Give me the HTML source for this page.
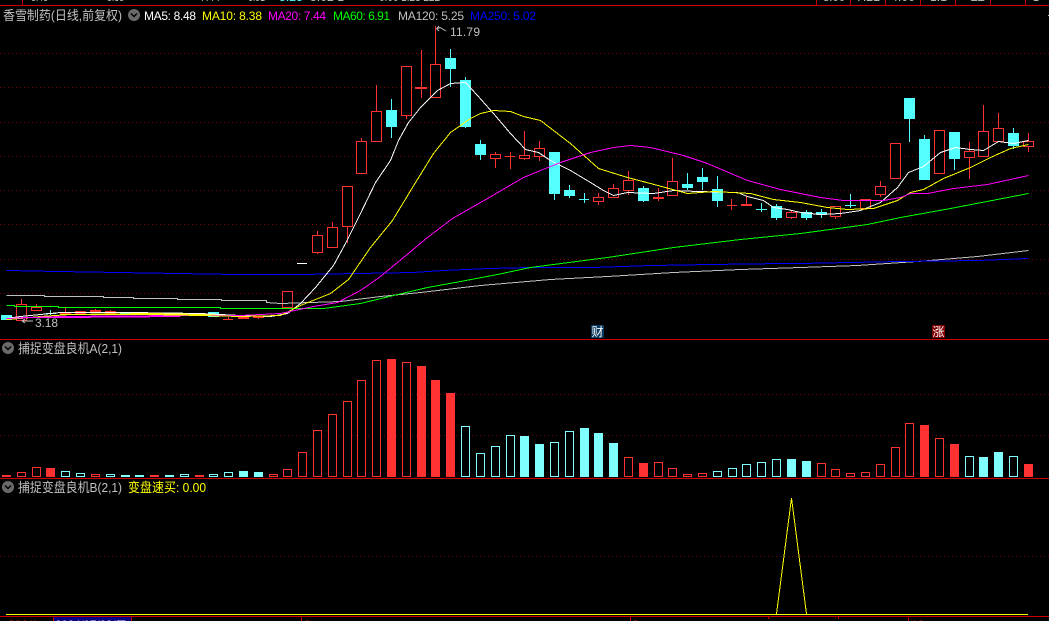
<!DOCTYPE html>
<html><head><meta charset="utf-8"><style>
html,body{margin:0;padding:0;background:#000;width:1049px;height:621px;overflow:hidden}
svg{display:block;position:absolute;left:0;top:0}
text{font-family:"Liberation Sans","WenQuanYi Zen Hei","Noto Sans CJK SC",sans-serif;font-size:12px}
.cn{font-size:13px}
.d{stroke:#780000;stroke-width:1;stroke-dasharray:1 3;fill:none}
.ax{stroke:#c80000;stroke-width:1;fill:none}
.hr{fill:#000;stroke:#ff3232;stroke-width:1}
.hc{fill:#000;stroke:#54ffff;stroke-width:1}
.vc{fill:#000;stroke:#80ffff;stroke-width:1}
.fr{fill:#ff3232}.fc{fill:#54ffff}.vf{fill:#80ffff}
.l{fill:none;stroke-width:1}
</style></head><body>
<svg width="1049" height="621" viewBox="0 0 1049 621" shape-rendering="crispEdges">
<rect width="1049" height="621" fill="#000"/>
<!-- top strip -->
<g fill="#c0c0c0">
<text x="31" y="1" textLength="17" lengthAdjust="spacingAndGlyphs">8.48</text>
<text x="107" y="1" textLength="17" lengthAdjust="spacingAndGlyphs">8.38</text>
<text x="200" y="1" textLength="20" lengthAdjust="spacingAndGlyphs">7.44</text>
<text x="248" y="1" textLength="17" lengthAdjust="spacingAndGlyphs">6.91</text>
<text x="279" y="1" textLength="24" lengthAdjust="spacingAndGlyphs" fill="#54ffff">5.25</text>
<text x="310" y="1" textLength="34" lengthAdjust="spacingAndGlyphs">5.02 1</text>
<text x="379" y="1" textLength="61" lengthAdjust="spacingAndGlyphs">0.00 1.23 222</text>
<text x="823" y="1" textLength="22" lengthAdjust="spacingAndGlyphs">8.00</text>
<text x="856" y="1" textLength="24" lengthAdjust="spacingAndGlyphs">7.21</text>
<text x="891" y="1" textLength="24" lengthAdjust="spacingAndGlyphs">4.00</text>
<text x="930" y="1" textLength="17" lengthAdjust="spacingAndGlyphs">1.1</text>
<text x="970" y="1" textLength="15" lengthAdjust="spacingAndGlyphs">11</text>
<text x="1033" y="1" textLength="6" lengthAdjust="spacingAndGlyphs">1</text>
</g>
<path class="ax" d="M0 5.500H1049M22.500 0V5M816.500 0V5M850.500 0V5M885.500 0V5M920.500 0V5M955.500 0V5M990.500 0V5M1025.500 0V5"/>
<!-- grids -->
<path class="d" d="M0 53.500H1049M0 87.500H1049M0 122.500H1049M0 156.500H1049M0 190.500H1049M0 224.500H1049M0 259.500H1049M0 293.500H1049M0 394.500H1049M0 435.500H1049M0 556.500H1049"/>
<path class="ax" d="M0 339.500H1049M0 478.500H1049M0 616.500H1049M301.500 616V621M630.500 616V621M768.500 616V619M838.500 616V619M908.500 616V621"/>
<!-- candle wicks -->
<path class="l" stroke="#ff3232" d="M21.500 299V304M36.500 304V307M65.500 308V315M95.500 309V312M110.500 310V315M154.500 314V317M228.500 317V320M258.500 316V319M317.500 231V254M332.500 222V227M347.500 227V243M361.500 138V141M376.500 85V111M406.500 116V119M421.500 50V98M435.500 26V64M495.500 152V168M510.500 152V169M524.500 131V160M539.500 141V161M598.500 193V205M613.500 184V188M628.500 171V195M658.500 188V201M672.500 158V181M731.500 199V210M746.500 196V204M791.500 211V219M835.500 217V219M880.500 181V197M969.500 142V179M983.500 105V131M998.500 113V128M1028.500 133V152"/>
<path class="l" stroke="#54ffff" d="M50.500 310V315M391.500 99V138M450.500 49V87M465.500 77V128M480.500 140V160M554.500 194V200M569.500 185V198M584.500 193V203M643.500 186V202M687.500 173V190M702.500 168V190M717.500 176V207M761.500 203V212M776.500 204V220M806.500 210V220M821.500 209V218M850.500 194V208M909.500 119V142M924.500 135V139M954.500 159V170M1013.500 128V149"/>
<!-- candle bodies -->
<g class="fc">
<rect x="1" y="315" width="11" height="5"/><rect x="46" y="313" width="10" height="1"/><rect x="120" y="312" width="11" height="2"/><rect x="208" y="312" width="11" height="5"/>
<rect x="386" y="110" width="11" height="17"/><rect x="445" y="58" width="11" height="11"/><rect x="460" y="80" width="11" height="47"/><rect x="475" y="144" width="11" height="11"/>
<rect x="549" y="152" width="11" height="42"/><rect x="564" y="190" width="11" height="6"/><rect x="579" y="199" width="10" height="1"/><rect x="638" y="188" width="11" height="13"/>
<rect x="682" y="184" width="11" height="4"/><rect x="697" y="177" width="11" height="5"/><rect x="712" y="189" width="11" height="12"/><rect x="756" y="209" width="11" height="1"/>
<rect x="771" y="206" width="11" height="12"/><rect x="801" y="212" width="11" height="6"/><rect x="816" y="212" width="11" height="3"/><rect x="845" y="205" width="11" height="1"/>
<rect x="904" y="98" width="11" height="21"/><rect x="919" y="139" width="11" height="41"/><rect x="949" y="132" width="11" height="27"/><rect x="1008" y="133" width="11" height="13"/>
</g>
<g class="fr">
<rect x="60" y="313" width="11" height="2"/><rect x="90" y="310" width="11" height="2"/><rect x="134" y="313" width="11" height="2"/><rect x="223" y="319" width="10" height="1"/>
<rect x="238" y="317" width="11" height="2"/><rect x="253" y="316" width="11" height="2"/><rect x="415" y="87" width="12" height="2"/><rect x="505" y="156" width="10" height="1"/>
<rect x="653" y="197" width="11" height="2"/><rect x="727" y="205" width="10" height="1"/><rect x="741" y="204" width="11" height="2"/>
</g>
<g class="hr">
<rect x="16.500" y="304.500" width="10" height="16"/><rect x="31.500" y="307.500" width="10" height="3"/><rect x="75.500" y="311.500" width="10" height="2"/><rect x="105.500" y="311.500" width="10" height="2"/><rect x="149.500" y="313.500" width="10" height="2"/><rect x="282.500" y="291.500" width="10" height="16"/>
<rect x="312.500" y="235.500" width="10" height="17"/><rect x="327.500" y="227.500" width="10" height="20"/><rect x="342.500" y="186.500" width="10" height="40"/><rect x="356.500" y="141.500" width="10" height="32"/><rect x="371.500" y="111.500" width="10" height="30"/><rect x="401.500" y="66.500" width="10" height="49"/><rect x="430.500" y="64.500" width="10" height="33"/>
<rect x="490.500" y="154.500" width="10" height="4"/><rect x="519.500" y="155.500" width="10" height="3"/><rect x="534.500" y="148.500" width="10" height="8"/><rect x="593.500" y="197.500" width="10" height="4"/><rect x="608.500" y="188.500" width="10" height="9"/><rect x="623.500" y="180.500" width="10" height="10"/><rect x="667.500" y="181.500" width="10" height="14"/>
<rect x="786.500" y="212.500" width="10" height="5"/><rect x="830.500" y="206.500" width="10" height="10"/><rect x="860.500" y="199.500" width="10" height="9"/><rect x="875.500" y="186.500" width="10" height="8"/><rect x="890.500" y="143.500" width="10" height="35"/><rect x="934.500" y="130.500" width="10" height="43"/><rect x="964.500" y="151.500" width="10" height="6"/><rect x="978.500" y="131.500" width="10" height="25"/><rect x="993.500" y="128.500" width="10" height="13"/><rect x="1023.500" y="141.500" width="10" height="5"/>
</g>
<rect x="297" y="263" width="10" height="1" fill="#fff"/>
<!-- MA lines -->
<g transform="translate(.5 .5)">
<polyline class="l" stroke="#c0c0c0" points="6,295 44,295 44,296 103,296 103,297 133,297 133,298 177,298 177,299 221,299 221,300 266,300 266,302 280,303 340,301 380,296 420,292 480,285 550,279 607,276 673,272 740,269 800,267 857,265 887,263 917,261 977,256 1028,250"/>
<polyline class="l" stroke="#0000ff" points="6,270 58,271 118,272 177,273 236,274 300,274 413,272 443,270 488,268 530,267 592,267 651,265 710,264 783,263 800,263 900,261 977,260 1028,258"/>
<polyline class="l" stroke="#00ff00" points="6,305 14,305 14,306 58,306 58,307 220,307 220,308 323,308 360,303 393,295 427,287 460,281 497,274 530,267 607,257 673,247 740,239 800,233 867,224 900,217 950,208 1028,193"/>
<polyline class="l" stroke="#ffffff" points="6,318 20,316 40,314 60,312 130,312 200,313 240,315 270,316 287,313 300,303 315,287 333,265 345,243 360,213 375,182 390,160 398,140 408,122 420,107 437,90 450,83 465,82 477,95 493,113 510,133 525,149 538,152 550,160 570,170 590,182 603,190 613,195 627,192 653,193 673,190 697,191 737,192 747,196 763,200 773,207 787,209 800,212 820,214 840,213 860,210 880,202 897,187 908,172 923,166 940,152 955,147 970,149 983,150 998,141 1013,143 1028,140"/>
<polyline class="l" stroke="#ffff00" points="6,319 20,318 40,316 70,314 150,313 200,314 240,316 280,315 300,305 330,293 348,279 370,247 392,220 412,187 433,153 450,132 470,118 480,113 493,110 510,111 523,116 540,120 570,143 598,168 627,177 650,183 687,193 713,191 750,193 773,199 800,202 827,207 847,209 873,208 897,200 910,192 923,189 943,178 970,167 990,157 1010,148 1028,144"/>
<polyline class="l" stroke="#ff00ff" points="6,318 60,316 180,315 240,315 280,313 313,306 337,302 360,290 380,276 403,257 427,237 452,218 487,198 523,177 540,170 560,162 590,152 613,147 630,145 650,147 683,155 707,163 747,180 780,189 800,193 820,197 843,200 883,200 900,197 910,193 927,193 953,188 987,184 1028,175"/>
<polyline class="l" stroke="#ffff00" points="60,314 150,314 200,315 240,316"/>
<polyline class="l" stroke="#ff00ff" points="20,317 60,317 180,316"/>
</g>
<!-- price marks -->
<g shape-rendering="auto" fill="none" stroke="#c0c0c0" stroke-width="1">
<path d="M436.500 29L440 27.500L446 31M436.500 29L439 26M436.500 29L439 31"/>
<path d="M22 321H33M22 321L25 319M22 321L25 323"/>
</g>
<text x="450" y="36" fill="#c0c0c0" textLength="30">11.79</text>
<text x="35" y="327" fill="#c0c0c0" textLength="23">3.18</text>
<!-- signal tags -->
<rect x="591" y="325" width="13" height="13" fill="#0a3a60"/>
<text x="591.500" y="336" fill="#fff" class="cn" style="font-size:12px">财</text>
<rect x="932" y="325" width="13" height="13" fill="#800000"/>
<text x="932.500" y="336" fill="#fff" class="cn" style="font-size:12px">涨</text>
<!-- header text -->
<text x="3" y="20" fill="#c0c0c0" class="cn" textLength="119" lengthAdjust="spacingAndGlyphs">香雪制药(日线,前复权)</text>
<g shape-rendering="auto">
<circle cx="134" cy="15" r="6" fill="#6a6a6a"/><path d="M131 13.500L134 16.500L137 13.500" fill="none" stroke="#000" stroke-width="1.500"/>
<circle cx="8" cy="348" r="6" fill="#6a6a6a"/><path d="M5 346.500L8 349.500L11 346.500" fill="none" stroke="#000" stroke-width="1.500"/>
<circle cx="8" cy="487" r="6" fill="#6a6a6a"/><path d="M5 485.500L8 488.500L11 485.500" fill="none" stroke="#000" stroke-width="1.500"/>
</g>
<text x="144" y="20" fill="#ffffff" textLength="52">MA5: 8.48</text>
<text x="202" y="20" fill="#ffff00" textLength="60">MA10: 8.38</text>
<text x="268" y="20" fill="#ff00ff" textLength="58">MA20: 7.44</text>
<text x="333" y="20" fill="#00ff00" textLength="57">MA60: 6.91</text>
<text x="398" y="20" fill="#c0c0c0" textLength="66">MA120: 5.25</text>
<text x="470" y="20" fill="#0000ff" textLength="66">MA250: 5.02</text>
<text x="18" y="353" fill="#c0c0c0" class="cn" textLength="104" lengthAdjust="spacingAndGlyphs">捕捉变盘良机A(2,1)</text>
<text x="18" y="492" fill="#c0c0c0" class="cn" textLength="104" lengthAdjust="spacingAndGlyphs">捕捉变盘良机B(2,1)</text>
<text x="128" y="492" fill="#ffff00" class="cn" textLength="78" lengthAdjust="spacingAndGlyphs">变盘速买: 0.00</text>
<!-- volume bars -->
<g class="vf">
<rect x="121" y="475" width="9" height="2"/><rect x="135" y="475" width="9" height="2"/><rect x="165" y="475" width="9" height="2"/><rect x="239" y="471" width="9" height="6"/><rect x="254" y="472" width="9" height="5"/>
<rect x="520" y="436" width="9" height="41"/><rect x="535" y="444" width="9" height="33"/><rect x="580" y="428" width="9" height="49"/><rect x="594" y="433" width="9" height="44"/><rect x="609" y="443" width="9" height="34"/>
<rect x="787" y="459" width="9" height="18"/><rect x="802" y="461" width="9" height="16"/><rect x="979" y="457" width="9" height="20"/><rect x="994" y="452" width="9" height="25"/>
</g>
<g class="fr">
<rect x="2" y="475" width="9" height="2"/><rect x="46" y="468" width="9" height="9"/><rect x="150" y="475" width="9" height="2"/><rect x="195" y="475" width="9" height="2"/>
<rect x="387" y="359" width="9" height="118"/><rect x="417" y="366" width="9" height="111"/><rect x="431" y="380" width="9" height="97"/><rect x="446" y="393" width="9" height="84"/><rect x="639" y="463" width="9" height="14"/>
<rect x="920" y="425" width="9" height="52"/><rect x="950" y="444" width="9" height="33"/><rect x="1024" y="464" width="9" height="13"/>
</g>
<g class="hr">
<rect x="17.500" y="472.500" width="8" height="4"/><rect x="32.500" y="467.500" width="8" height="9"/><rect x="91.500" y="474.500" width="8" height="2"/><rect x="269.500" y="474.500" width="8" height="2"/><rect x="283.500" y="469.500" width="8" height="7"/><rect x="298.500" y="452.500" width="8" height="24"/><rect x="313.500" y="430.500" width="8" height="46"/><rect x="328.500" y="414.500" width="8" height="62"/><rect x="343.500" y="401.500" width="8" height="75"/><rect x="357.500" y="380.500" width="8" height="96"/><rect x="372.500" y="360.500" width="8" height="116"/><rect x="402.500" y="362.500" width="8" height="114"/>
<rect x="624.500" y="457.500" width="8" height="19"/><rect x="654.500" y="462.500" width="8" height="14"/><rect x="668.500" y="468.500" width="8" height="8"/><rect x="683.500" y="474.500" width="8" height="2"/><rect x="698.500" y="473.500" width="8" height="3"/><rect x="817.500" y="463.500" width="8" height="13"/><rect x="831.500" y="469.500" width="8" height="7"/><rect x="846.500" y="473.500" width="8" height="3"/><rect x="861.500" y="472.500" width="8" height="4"/><rect x="876.500" y="464.500" width="8" height="12"/><rect x="891.500" y="447.500" width="8" height="29"/><rect x="905.500" y="423.500" width="8" height="53"/><rect x="935.500" y="438.500" width="8" height="38"/>
</g>
<g class="vc">
<rect x="61.500" y="471.500" width="8" height="5"/><rect x="76.500" y="473.500" width="8" height="3"/><rect x="106.500" y="474.500" width="8" height="2"/><rect x="180.500" y="474.500" width="8" height="2"/><rect x="209.500" y="474.500" width="8" height="2"/><rect x="224.500" y="472.500" width="8" height="4"/>
<rect x="461.500" y="426.500" width="8" height="50"/><rect x="476.500" y="453.500" width="8" height="23"/><rect x="491.500" y="446.500" width="8" height="30"/><rect x="506.500" y="435.500" width="8" height="41"/><rect x="550.500" y="442.500" width="8" height="34"/><rect x="565.500" y="431.500" width="8" height="45"/>
<rect x="713.500" y="471.500" width="8" height="5"/><rect x="728.500" y="468.500" width="8" height="8"/><rect x="742.500" y="464.500" width="8" height="12"/><rect x="757.500" y="462.500" width="8" height="14"/><rect x="772.500" y="459.500" width="8" height="17"/><rect x="965.500" y="456.500" width="8" height="20"/><rect x="1009.500" y="456.500" width="8" height="20"/>
</g>
<!-- spike -->
<rect x="6" y="614" width="1022" height="1" fill="#ffff00"/>
<polyline class="l" stroke="#ffff00" points="776.500,614 791.500,498 806.500,614"/>
<!-- bottom strip -->
<rect x="53" y="617" width="79" height="4" fill="#000080"/>
<path class="ax" d="M53.500 617V621M131.500 617V621"/>
<text x="55" y="629" fill="#fff" textLength="72" lengthAdjust="spacingAndGlyphs">2024/07/23/二</text>
<text x="8" y="629" fill="#ff3232" textLength="30" lengthAdjust="spacingAndGlyphs">336/1</text>
<text x="304" y="629" fill="#ff3232" style="font-size:12px">9</text>
<text x="632" y="629" fill="#ff3232" style="font-size:12px">8</text>
<text x="911" y="629" fill="#ff3232" style="font-size:12px">10</text>
<rect x="1048" y="15" width="1" height="1" fill="#c0c0c0"/>
</svg>
</body></html>
